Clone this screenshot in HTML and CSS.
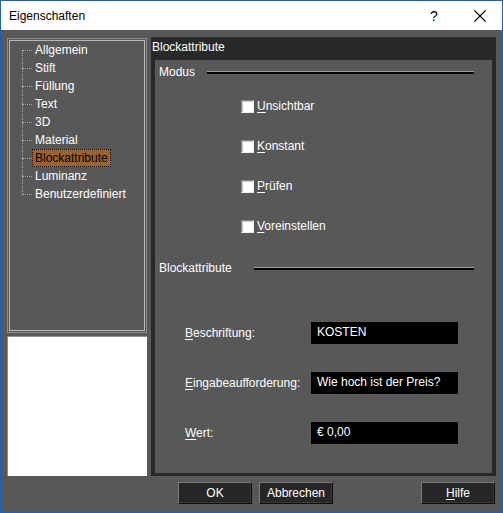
FILE: index.html
```html
<!DOCTYPE html>
<html lang="de">
<head>
<meta charset="utf-8">
<title>Eigenschaften</title>
<link rel="stylesheet" href="styles.css">
</head>
<body>
<div class="window">
  <div class="titlebar">
    <span class="title">Eigenschaften</span>
    <span class="tb-help">?</span>
    <span class="tb-close"><svg width="12" height="12" viewBox="0 0 12 12"><path d="M0.5 0.5 L11.5 11.5 M11.5 0.5 L0.5 11.5" stroke="#000" stroke-width="1.1" fill="none"/></svg></span>
  </div>
  <div class="main">
    <div class="left">
      <div class="tree">
        <ul class="tree-list">
          <li class="tree-item"><span class="tree-label">Allgemein</span></li>
          <li class="tree-item"><span class="tree-label">Stift</span></li>
          <li class="tree-item"><span class="tree-label">Füllung</span></li>
          <li class="tree-item"><span class="tree-label">Text</span></li>
          <li class="tree-item"><span class="tree-label">3D</span></li>
          <li class="tree-item"><span class="tree-label">Material</span></li>
          <li class="tree-item"><span class="tree-label selected">Blockattribute</span></li>
          <li class="tree-item"><span class="tree-label">Luminanz</span></li>
          <li class="tree-item"><span class="tree-label">Benutzerdefiniert</span></li>
        </ul>
      </div>
      <div class="preview"></div>
    </div>
    <div class="panel">
      <div class="panel-head">Blockattribute</div>
      <div class="panel-body">
        <div class="sect sect-modus">
          <span class="sect-label">Modus</span>
          <span class="sect-line"></span>
        </div>
        <div class="checks">
          <div class="check-row"><span class="checkbox"></span><span class="check-label"><u>U</u>nsichtbar</span></div>
          <div class="check-row"><span class="checkbox"></span><span class="check-label"><u>K</u>onstant</span></div>
          <div class="check-row"><span class="checkbox"></span><span class="check-label"><u>P</u>rüfen</span></div>
          <div class="check-row"><span class="checkbox"></span><span class="check-label"><u>V</u>oreinstellen</span></div>
        </div>
        <div class="sect sect-block">
          <span class="sect-label">Blockattribute</span>
          <span class="sect-line"></span>
        </div>
        <div class="fields">
          <div class="field-row"><span class="field-label"><u>B</u>eschriftung:</span><span class="field-input">KOSTEN</span></div>
          <div class="field-row"><span class="field-label"><u>E</u>ingabeaufforderung:</span><span class="field-input">Wie hoch ist der Preis?</span></div>
          <div class="field-row"><span class="field-label"><u>W</u>ert:</span><span class="field-input">€ 0,00</span></div>
        </div>
      </div>
    </div>
  </div>
  <div class="footer">
    <span class="btn">OK</span>
    <span class="btn">Abbrechen</span>
    <span class="btn btn-help"><u>H</u>ilfe</span>
  </div>
</div>
</body>
</html>
```
FILE: styles.css
```css
* { box-sizing: border-box; }
html, body { margin: 0; padding: 0; background: #585858; }
body { font-family: "Liberation Sans", Arial, sans-serif; font-size: 12px; color: #fff; }
u { text-decoration: underline; text-underline-offset: 2px; }

.window {
  width: 503px; height: 513px;
  border: 1px solid #1f5fb8;
  background: #585858;
  display: flex; flex-direction: column;
}

.titlebar {
  height: 29px; background: #fff; color: #000;
  display: flex; align-items: center;
  padding-left: 8px;
}
.title { font-size: 12px; flex: 1; }
.tb-help { font-size: 14px; width: 12px; margin-right: 32px; }
.tb-close { width: 12px; height: 12px; margin-right: 16px; display: flex; }

.main {
  display: flex;
  padding: 7px 6px 0 6px;
  gap: 4px;
  height: 446px;
}

.left { width: 140px; margin-top: 1px; display: flex; flex-direction: column; gap: 3px; }
.tree {
  height: 295px;
  border: 1px solid #8c8c8c;
  box-shadow: inset 0 0 0 1px #585858, inset 0 0 0 2px #b8b8b8;
  padding-top: 2px;
}
.tree-list { list-style: none; margin: 0; padding: 0; position: relative; }
.tree-list::before {
  content: ""; position: absolute;
  left: 14px; top: 9px; height: 144px;
  border-left: 1px dotted #a8a8a8;
}
.tree-item { height: 18px; display: flex; align-items: center; padding-left: 14px; }
.tree-item::before {
  content: ""; width: 10px; height: 0;
  border-top: 1px dotted #a8a8a8;
}
.tree-label {
  height: 18px; line-height: 16px;
  border: 1px solid transparent;
  padding: 0 2px;
  color: #fff;
  white-space: nowrap;
}
.tree-label.selected {
  background: #9e622c;
  color: #000;
  border: 1px dotted #111;
}
.preview {
  height: 140px; background: #fff;
  border-left: 1px solid #8c8c8c;
  border-top: 1px solid #8c8c8c;
}

.panel { width: 345px; height: 439px; background: #282828; display: flex; flex-direction: column; }
.panel-head { height: 23px; line-height: 20px; padding-left: 1px; color: #fff; }
.panel-body { flex: 1; margin: 0 4px 3px 4px; background: #585858; padding-top: 4px; }

.sect { height: 16px; display: flex; align-items: center; padding-left: 4px; padding-right: 18px; }
.sect-label { white-space: nowrap; }
.sect-modus .sect-label { width: 48px; }
.sect-block .sect-label { width: 95px; }
.sect-line { flex: 1; height: 3px; border-top: 1px solid #a0a0a0; background: #000; }
.sect-block { margin-top: 27px; }

.checks { margin-top: 20px; padding-left: 86px; display: flex; flex-direction: column; gap: 27px; }
.check-row { height: 13px; display: flex; align-items: center; gap: 3px; }
.checkbox {
  width: 13px; height: 13px; background: #fff;
  border: 1px solid; border-color: #8a8a8a #f0f0f0 #f0f0f0 #8a8a8a;
  box-shadow: inset 1px 1px 0 #c4c4c4;
}
.check-label { line-height: 13px; }

.fields { margin-top: 46px; padding-left: 30px; display: flex; flex-direction: column; gap: 28px; }
.field-row { height: 22px; display: flex; align-items: center; }
.field-label { width: 126px; }
.field-input {
  width: 147px; height: 22px; background: #000; color: #fff;
  line-height: 20px; padding-left: 6px;
}

.footer { margin-top: 6px; height: 22px; display: flex; gap: 7px; padding-left: 177px; padding-right: 7px; }
.btn {
  width: 74px; height: 22px;
  background: #262626; color: #fff;
  border: 1px solid; border-color: #7a7a7a #0c0c0c #0c0c0c #7a7a7a;
  box-shadow: inset -1px -1px 0 #3a3a3a;
  display: flex; align-items: center; justify-content: center;
}
.btn-help { margin-left: auto; }
```
